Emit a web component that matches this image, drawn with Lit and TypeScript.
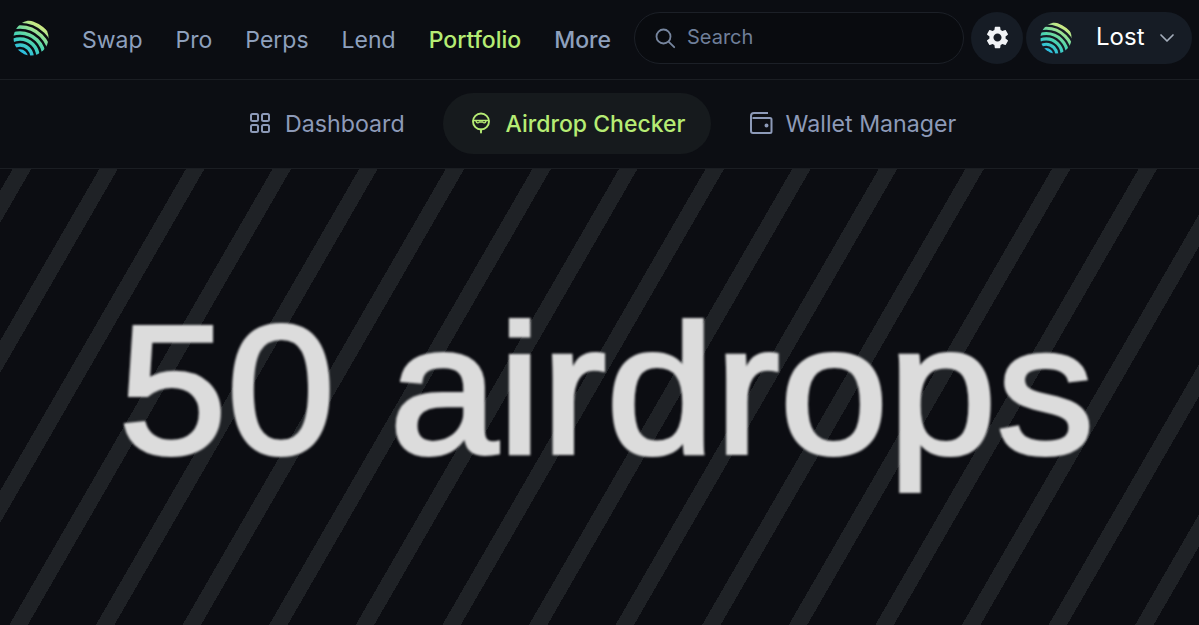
import { LitElement, html, css, svg } from 'lit';
import { customElement } from 'lit/decorators.js';

const topLinks = ['Swap', 'Pro', 'Perps', 'Lend', 'Portfolio', 'More'];

let logoCount = 0;

// striped ball logo: concentric arcs clipped to a circle
function logo(size: number) {
  const id = `logo${logoCount++}`;
  const radii = [6, 12, 18, 24, 30, 36];
  return html`<svg class="logo" width=${size} height=${size} viewBox="0 0 36 36">
    <defs>
      <linearGradient id="${id}g" gradientUnits="userSpaceOnUse" x1="8" y1="34" x2="28" y2="3">
        <stop offset="0" stop-color="#27b9e6"></stop>
        <stop offset="0.45" stop-color="#4fd6ac"></stop>
        <stop offset="1" stop-color="#e2ec7c"></stop>
      </linearGradient>
      <clipPath id="${id}c"><circle cx="18" cy="18" r="17.5"></circle></clipPath>
    </defs>
    <g clip-path="url(#${id}c)" fill="none" stroke="url(#${id}g)" stroke-width="3.5">
      ${radii.map((r) => svg`<circle cx="7" cy="37" r=${r}></circle>`)}
    </g>
  </svg>`;
}

@customElement('app-root')
export class AppRoot extends LitElement {
  static styles = css`
    :host {
      display: block;
      width: 1199px;
      height: 625px;
      overflow: hidden;
      background: #0b0d12;
      font-family: 'Inter', 'Liberation Sans', sans-serif;
    }

    .top {
      display: flex;
      align-items: center;
      box-sizing: border-box;
      height: 80px;
      padding: 0 7px 4px 13px;
      border-bottom: 1px solid #1b1e23;
    }

    .links {
      display: flex;
      gap: 33px;
      margin: 5px 23px 0 33px;
    }

    .links a {
      font-size: 23px;
      line-height: 30px;
      color: #8ea0bd;
    }

    .links a.on {
      color: #b6ec74;
      font-weight: 500;
    }

    .links a.more {
      font-weight: 500;
    }

    .search {
      display: flex;
      align-items: center;
      gap: 11px;
      box-sizing: border-box;
      width: 330px;
      height: 52px;
      padding-left: 19px;
      border: 1px solid #1c2027;
      border-radius: 26px;
      background: #090b0f;
      color: #6f7f99;
      font-size: 20px;
    }

    .search span {
      margin-top: -2px;
    }

    .gear {
      display: flex;
      align-items: center;
      justify-content: center;
      width: 52px;
      height: 52px;
      margin-left: 7px;
      border-radius: 50%;
      background: #161c25;
    }

    .account {
      display: flex;
      align-items: center;
      box-sizing: border-box;
      width: 166px;
      height: 52px;
      margin-left: 3px;
      padding-left: 14px;
      border-radius: 26px;
      background: #161c25;
      color: #fff;
      font-size: 24px;
    }

    .account .name {
      margin-left: 24px;
      margin-top: -3px;
    }

    .account svg.chev {
      margin-left: 15px;
    }

    .sub {
      display: flex;
      align-items: center;
      box-sizing: border-box;
      height: 89px;
      padding: 0 0 2px 249px;
      border-bottom: 1px solid #1b1e23;
      background: #0c0e13;
    }

    .tab {
      display: flex;
      align-items: center;
      height: 61px;
      font-size: 23.2px;
      color: #8d9ab8;
    }

    .tab span {
      margin-top: 2px;
    }

    .tab.dash {
      gap: 14px;
      margin-right: 38px;
    }

    .tab.air {
      gap: 14px;
      box-sizing: border-box;
      width: 268px;
      padding-left: 27px;
      border-radius: 31px;
      background: #161a1d;
      color: #b6ec74;
      font-size: 23px;
      font-weight: 500;
    }

    .tab.wallet {
      gap: 13px;
      margin-left: 38px;
    }

    .hero {
      display: flex;
      justify-content: center;
      box-sizing: border-box;
      height: 456px;
      padding: 115px 0 0 13px;
      background: repeating-linear-gradient(
        120deg,
        #0c0d12 0,
        #0c0d12 11px,
        #1f2226 11px,
        #1f2226 27px,
        #0c0d12 27px,
        #0c0d12 75px
      );
    }

    .hero h1 {
      margin: 0;
      font-family: 'Liberation Sans', Arial, sans-serif;
      font-size: 184px;
      font-weight: 400;
      line-height: 210px;
      color: #dcdcdc;
      white-space: nowrap;
      -webkit-text-stroke: 4px #dcdcdc;
      transform: scaleX(1.06);
      filter: blur(0.9px);
    }
  `;

  render() {
    return html`
      <div class="top">
        ${logo(36)}
        <nav class="links">
          ${topLinks.map(
            (l) => html`<a class=${l === 'Portfolio' ? 'on' : l === 'More' ? 'more' : ''}>${l}</a>`
          )}
        </nav>
        <div class="search">
          <svg width="22" height="22" viewBox="0 0 22 22" fill="none" stroke="#77869f" stroke-width="1.8" stroke-linecap="round">
            <circle cx="9.5" cy="9.5" r="7"></circle>
            <path d="M14.8 14.8l5.4 5.4"></path>
          </svg>
          <span>Search</span>
        </div>
        <div class="gear">
          <svg width="27" height="27" viewBox="0 0 24 24" fill="#f1f3f6">
            <path d="M19.14 12.94c.04-.3.06-.61.06-.94 0-.32-.02-.64-.07-.94l2.03-1.58c.18-.14.23-.41.12-.61l-1.92-3.32c-.12-.22-.37-.29-.59-.22l-2.39.96c-.5-.38-1.03-.7-1.62-.94l-.36-2.54c-.04-.24-.24-.41-.48-.41h-3.84c-.24 0-.43.17-.47.41l-.36 2.54c-.59.24-1.13.57-1.62.94l-2.39-.96c-.22-.08-.47 0-.59.22L2.74 8.87c-.12.21-.08.47.12.61l2.03 1.58c-.05.3-.09.63-.09.94s.02.64.07.94l-2.03 1.58c-.18.14-.23.41-.12.61l1.92 3.32c.12.22.37.29.59.22l2.39-.96c.5.38 1.03.7 1.62.94l.36 2.54c.05.24.24.41.48.41h3.84c.24 0 .44-.17.47-.41l.36-2.54c.59-.24 1.13-.56 1.62-.94l2.39.96c.22.08.47 0 .59-.22l1.92-3.32c.12-.22.07-.47-.12-.61l-2.01-1.58zM12 15.6c-1.98 0-3.6-1.62-3.6-3.6s1.62-3.6 3.6-3.6 3.6 1.62 3.6 3.6-1.62 3.6-3.6 3.6z"></path>
          </svg>
        </div>
        <div class="account">
          ${logo(32)}
          <span class="name">Lost</span>
          <svg class="chev" width="16" height="10" viewBox="0 0 16 10" fill="none" stroke="#a4adbb" stroke-width="1.7" stroke-linecap="round" stroke-linejoin="round">
            <path d="M2 2l6 6 6-6"></path>
          </svg>
        </div>
      </div>
      <div class="sub">
        <div class="tab dash">
          <svg width="22" height="22" viewBox="0 0 22 22" fill="none" stroke="#8d9ab8" stroke-width="2">
            <rect x="2" y="2" width="7" height="7" rx="1.5"></rect>
            <rect x="13" y="2" width="7" height="7" rx="1.5"></rect>
            <rect x="2" y="13" width="7" height="7" rx="1.5"></rect>
            <rect x="13" y="13" width="7" height="7" rx="1.5"></rect>
          </svg>
          <span>Dashboard</span>
        </div>
        <div class="tab air">
          <svg width="22" height="22" viewBox="0 0 22 22" fill="none" stroke="#b6ec74" stroke-width="1.9" stroke-linecap="round" stroke-linejoin="round">
            <circle cx="11" cy="9.5" r="8"></circle>
            <path stroke-width="1.3" d="M3.200 8.500h15.600"></path>
            <path stroke-width="1.3" d="M6 9c.6 2.400 2.400 2.400 3.200 1h3.600c.8 1.400 2.600 1.400 3.200-1"></path>
            <path d="M11 17.500v3"></path>
          </svg>
          <span>Airdrop Checker</span>
        </div>
        <div class="tab wallet">
          <svg width="24" height="24" viewBox="0 0 24 24" fill="none" stroke="#8d9ab8" stroke-width="2" stroke-linejoin="round">
            <path d="M2 5v15a2 2 0 0 0 2 2h17a1.500 1.500 0 0 0 1.500-1.500v-12A1.500 1.500 0 0 0 21 7H3.500M2 5a3 3 0 0 1 3-3h14"></path>
            <circle cx="17.500" cy="14.500" r="1" fill="#8d9ab8"></circle>
          </svg>
          <span>Wallet Manager</span>
        </div>
      </div>
      <section class="hero"><h1>50 airdrops</h1></section>
    `;
  }
}
